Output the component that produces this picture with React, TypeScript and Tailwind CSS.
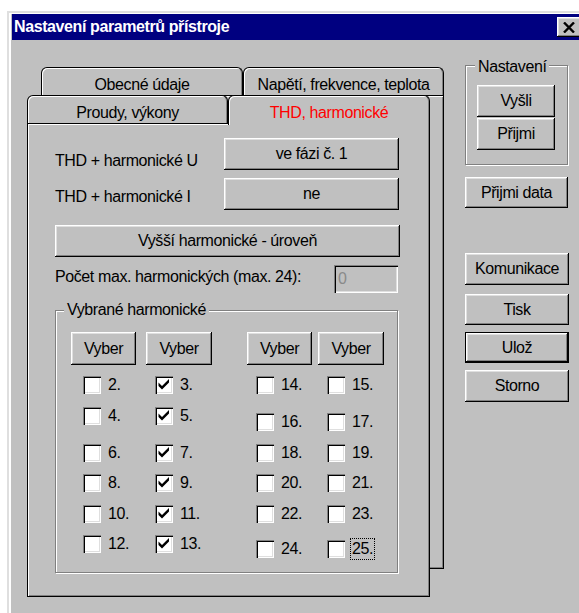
import React from 'react'

// raised 3D bevel used by every push button
const raised =
  'shadow-[inset_-1px_-1px_#000,inset_1px_1px_#fff,inset_-2px_-2px_#808080,inset_2px_2px_#dfdfdf]'
// sunken bevel for edit boxes and check boxes
const sunken =
  'shadow-[inset_1px_1px_#808080,inset_2px_2px_#000,inset_-1px_-1px_#fff,inset_-2px_-2px_#dfdfdf]'
// etched line of a group box
const etched = 'border border-[#808080] shadow-[inset_1px_1px_#fff,1px_1px_#fff]'

function Btn({ label, className = '', isDefault = false }: { label: string; className?: string; isDefault?: boolean }) {
  return (
    <button
      type="button"
      className={`flex items-center justify-center bg-[#c0c0c0] text-black font-normal leading-none ${raised} ${
        isDefault ? 'border border-black' : ''
      } ${className}`}
    >
      {label}
    </button>
  )
}

function CheckBox({ checked }: { checked: boolean }) {
  return (
    <div className={`w-[18px] h-[18px] shrink-0 bg-white ${sunken}`}>
      {checked && (
        <svg width="18" height="18" viewBox="0 0 18 18">
          <polygon points="3.5,6.5 7,10 14,3 14,6.5 7,13.5 3.5,10" fill="#000" />
        </svg>
      )}
    </div>
  )
}

const leftGaps = ['mt-[11px]', 'mt-[13px]', 'mt-[19px]', 'mt-[12px]', 'mt-[13px]', 'mt-[12px]']
const rightGaps = ['mt-[11px]', 'mt-[19px]', 'mt-[13px]', 'mt-[12px]', 'mt-[13px]', 'mt-[17px]']

const columns = [
  { nums: [2, 4, 6, 8, 10, 12], checked: false, gaps: leftGaps, cls: 'w-[65px]', pad: 'pl-[12px]' },
  { nums: [3, 5, 7, 9, 11, 13], checked: true, gaps: leftGaps, cls: 'ml-[10px] w-[66px]', pad: 'pl-[9px]' },
  { nums: [14, 16, 18, 20, 22, 24], checked: false, gaps: rightGaps, cls: 'ml-[35px] w-[65px]', pad: 'pl-[9px]' },
  { nums: [15, 17, 19, 21, 23, 25], checked: false, gaps: rightGaps, cls: 'ml-[6px] w-[66px]', pad: 'pl-[9px]' },
]

function Tab({ label, className = '', active = false }: { label: string; className?: string; active?: boolean }) {
  return (
    <div
      className={`flex justify-center pt-[5px] bg-[#c0c0c0] border border-b-0 border-black rounded-t-[6px] shadow-[inset_1px_1px_#fff,inset_-1px_0_#808080] ${
        active ? 'h-[30px] -mb-[2px] relative z-10 text-[#ff0000]' : 'h-[28px]'
      } ${className}`}
    >
      {label}
    </div>
  )
}

export default function App() {
  return (
    <div className="w-[579px] h-[613px] overflow-hidden bg-white font-['Liberation_Sans',Arial,sans-serif] text-[16px] tracking-[-0.4px] text-black">
      <div className="ml-[7px] mt-[11px] w-[600px] h-[640px] border-t-2 border-l-2 border-[#dfdfdf] bg-[#c0c0c0]">
        <div className="h-full border-t border-l-2 border-white pl-px">
          {/* title bar */}
          <div className="h-[26px] bg-[#000080] flex items-center">
            <span className="w-[545px] pl-[2px] text-white font-bold leading-none">Nastavení parametrů přístroje</span>
            <button
              type="button"
              className={`w-[24px] h-[20px] flex items-center justify-center bg-[#c0c0c0] ${raised}`}
            >
              <svg width="12" height="11" viewBox="0 0 12 11">
                <path d="M1 0.5 L11 10.5 M11 0.5 L1 10.5" stroke="#000" strokeWidth="2.4" />
              </svg>
            </button>
          </div>

          <div className="flex items-start pl-[15px]">
            {/* stacked tab sheets */}
            <div className="grid mt-[27px]">
              <div className="col-start-1 row-start-1 ml-[14px] w-[403px]">
                <div className="flex">
                  <Tab label="Obecné údaje" className="w-[202px]" />
                  <Tab label="Napětí, frekvence, teplota" className="w-[201px]" />
                </div>
                <div className="h-[474px] bg-[#c0c0c0] border border-black shadow-[inset_1px_1px_#fff,inset_-1px_-1px_#808080]" />
              </div>

              <div className="col-start-1 row-start-1 mt-[28px] w-[403px]">
                <div className="flex items-start">
                  <Tab label="Proudy, výkony" className="w-[201px]" />
                  <Tab label="THD, harmonické" className="w-[202px]" active />
                </div>
                <div className="h-[474px] bg-[#c0c0c0] border border-black shadow-[inset_1px_1px_#fff,inset_-1px_-1px_#808080] pl-[27px] pt-[14px]">
                  <div className="flex items-start h-[32px]">
                    <span className="w-[169px] pt-[14px] leading-[18px]">THD + harmonické U</span>
                    <Btn label="ve fázi č. 1" className="w-[175px] h-[32px]" />
                  </div>
                  <div className="flex items-start h-[32px] mt-[8px]">
                    <span className="w-[169px] pt-[10px] leading-[18px]">THD + harmonické I</span>
                    <Btn label="ne" className="w-[175px] h-[32px]" />
                  </div>
                  <Btn label="Vyšší harmonické - úroveň" className="w-[345px] h-[32px] mt-[15px]" />
                  <div className="flex items-start h-[28px] mt-[8px]">
                    <span className="w-[279px] pt-[3px] leading-[18px]">Počet max. harmonických (max. 24):</span>
                    <div className={`w-[64px] h-[28px] bg-[#c0c0c0] pl-[4px] pt-[5px] leading-[18px] text-[#8a8a8a] ${sunken}`}>0</div>
                  </div>

                  {/* selected harmonics */}
                  <div className={`relative mt-[17px] w-[343px] h-[263px] ${etched} pl-[15px] pt-[21px]`}>
                    <span className="absolute -top-[10px] left-[8px] px-[3px] bg-[#c0c0c0] leading-[18px]">Vybrané harmonické</span>
                    <div className="flex">
                      {columns.map((col, ci) => (
                        <div key={ci} className={`flex flex-col ${col.cls}`}>
                          <Btn label="Vyber" className="w-full h-[33px]" />
                          {col.nums.map((n, i) => (
                            <div key={n} className={`flex items-center h-[18px] ${col.gaps[i]} ${col.pad}`}>
                              <CheckBox checked={col.checked} />
                              <span
                                className={`ml-[7px] leading-[18px] ${
                                  n === 25 ? 'outline-1 outline-dotted outline-black outline-offset-[1px]' : ''
                                }`}
                              >
                                {n}.
                              </span>
                            </div>
                          ))}
                        </div>
                      ))}
                    </div>
                  </div>
                </div>
              </div>
            </div>

            {/* right-hand buttons */}
            <div className="ml-[21px] mt-[25px] w-[104px] flex flex-col">
              <div className={`relative w-[103px] h-[100px] ${etched} pl-[11px] pt-[19px]`}>
                <span className="absolute -top-[8px] left-[9px] px-[3px] bg-[#c0c0c0] leading-[18px]">Nastavení</span>
                <Btn label="Vyšli" className="w-[78px] h-[32px]" />
                <Btn label="Přijmi" className="w-[78px] h-[32px] mt-px" />
              </div>
              <Btn label="Přijmi data" className="w-[103px] h-[31px] mt-[12px]" />
              <Btn label="Komunikace" className="w-[104px] h-[32px] mt-[45px]" />
              <Btn label="Tisk" className="w-[104px] h-[31px] mt-[9px]" />
              <Btn label="Ulož" className="w-[104px] h-[31px] mt-[7px]" isDefault />
              <Btn label="Storno" className="w-[104px] h-[32px] mt-[7px]" />
            </div>
          </div>
        </div>
      </div>
    </div>
  )
}
